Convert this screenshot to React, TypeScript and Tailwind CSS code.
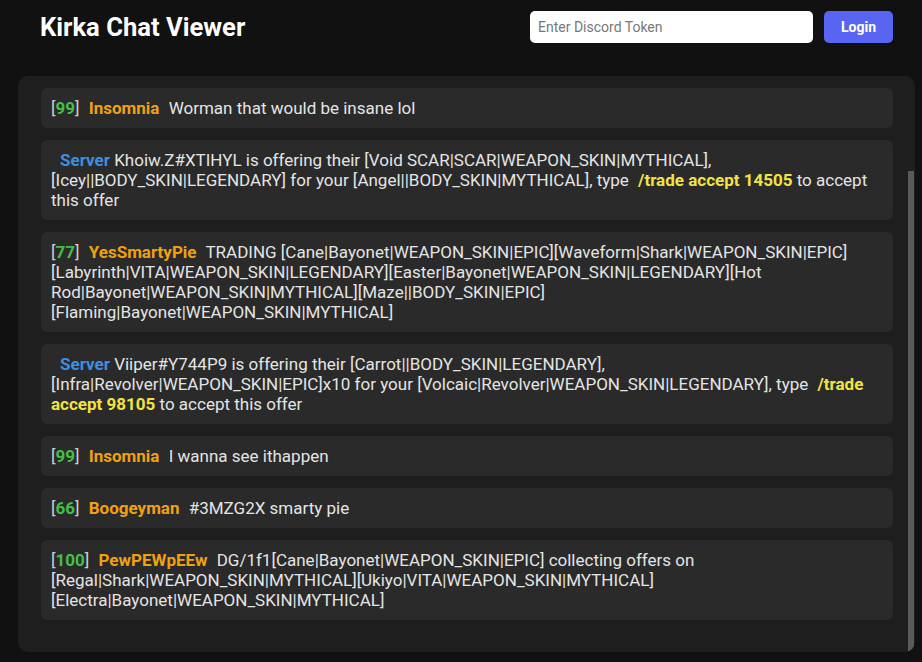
import React from "react";

type Msg =
  | { kind: "user"; level: string; name: string; text: string }
  | { kind: "server"; before: string; code: string; after: string };

const messages: Msg[] = [
  { kind: "user", level: "99", name: "Insomnia", text: "Worman that would be insane lol" },
  {
    kind: "server",
    before:
      "Khoiw.Z#XTIHYL is offering their [Void SCAR|SCAR|WEAPON_SKIN|MYTHICAL], [Icey||BODY_SKIN|LEGENDARY] for your [Angel||BODY_SKIN|MYTHICAL], type ",
    code: "/trade accept 14505",
    after: " to accept this offer",
  },
  {
    kind: "user",
    level: "77",
    name: "YesSmartyPie",
    text: "TRADING [Cane|Bayonet|WEAPON_SKIN|EPIC][Waveform|Shark|WEAPON_SKIN|EPIC][Labyrinth|VITA|WEAPON_SKIN|LEGENDARY][Easter|Bayonet|WEAPON_SKIN|LEGENDARY][Hot Rod|Bayonet|WEAPON_SKIN|MYTHICAL][Maze||BODY_SKIN|EPIC][Flaming|Bayonet|WEAPON_SKIN|MYTHICAL]",
  },
  {
    kind: "server",
    before:
      "Viiper#Y744P9 is offering their [Carrot||BODY_SKIN|LEGENDARY], [Infra|Revolver|WEAPON_SKIN|EPIC]x10 for your [Volcaic|Revolver|WEAPON_SKIN|LEGENDARY], type ",
    code: "/trade accept 98105",
    after: " to accept this offer",
  },
  { kind: "user", level: "99", name: "Insomnia", text: "I wanna see ithappen" },
  { kind: "user", level: "66", name: "Boogeyman", text: "#3MZG2X smarty pie" },
  {
    kind: "user",
    level: "100",
    name: "PewPEWpEEw",
    text: "DG/1f1[Cane|Bayonet|WEAPON_SKIN|EPIC] collecting offers on [Regal|Shark|WEAPON_SKIN|MYTHICAL][Ukiyo|VITA|WEAPON_SKIN|MYTHICAL][Electra|Bayonet|WEAPON_SKIN|MYTHICAL]",
  },
];

function Message({ m }: { m: Msg }) {
  return (
    <div className="rounded-[6px] bg-[#2a2a2a] px-[10px] py-[10px] text-[17px] leading-[20px] text-[#e4e4e4] break-words">
      {m.kind === "user" ? (
        <>
          <span className="mr-[5px] text-[#d0d0d0]">
            [<span className="font-bold text-[#44bf45]">{m.level}</span>]
          </span>{" "}
          <span className="mr-[5px] font-bold text-[#f0a112]">{m.name}</span> {m.text}
        </>
      ) : (
        <>
          <span className="ml-[9px] font-bold text-[#3d8fe0]">Server</span> {m.before}
          <span className="ml-[5px] font-bold text-[#f2e245]">{m.code}</span>
          {m.after}
        </>
      )}
    </div>
  );
}

export default function App() {
  return (
    <div
      className="min-h-[662px] bg-[#111111] text-white"
      style={{ fontFamily: "Roboto, 'Noto Sans', sans-serif" }}
    >
      <header className="flex h-[54px] items-center pl-[40px] pr-[29px]">
        <h1 className="text-[25.6px] leading-[32px] font-bold text-white">Kirka Chat Viewer</h1>
        <div className="ml-auto flex items-center gap-[11px]">
          <input
            type="text"
            placeholder="Enter Discord Token"
            className="h-[32px] w-[283px] rounded-[5px] bg-white px-[8px] text-[14px] text-[#222] placeholder:text-[#777] outline-none"
          />
          <button className="h-[32px] w-[69px] rounded-[5px] bg-[#5865f2] text-[14px] font-bold text-white">
            Login
          </button>
        </div>
      </header>
      <main className="pl-[18px] pr-[7px] pt-[22px]">
        <div className="relative h-[576px] overflow-hidden rounded-[10px] bg-[#1e1e1e] pl-[23px] pr-[22px] pt-[12px]">
          <div className="flex flex-col gap-[12px]">
            {messages.map((m, i) => (
              <Message key={i} m={m} />
            ))}
          </div>
          <div className="absolute right-[1px] top-[95px] bottom-0 w-[6px] bg-[#5a5a5a]" />
        </div>
      </main>
    </div>
  );
}
